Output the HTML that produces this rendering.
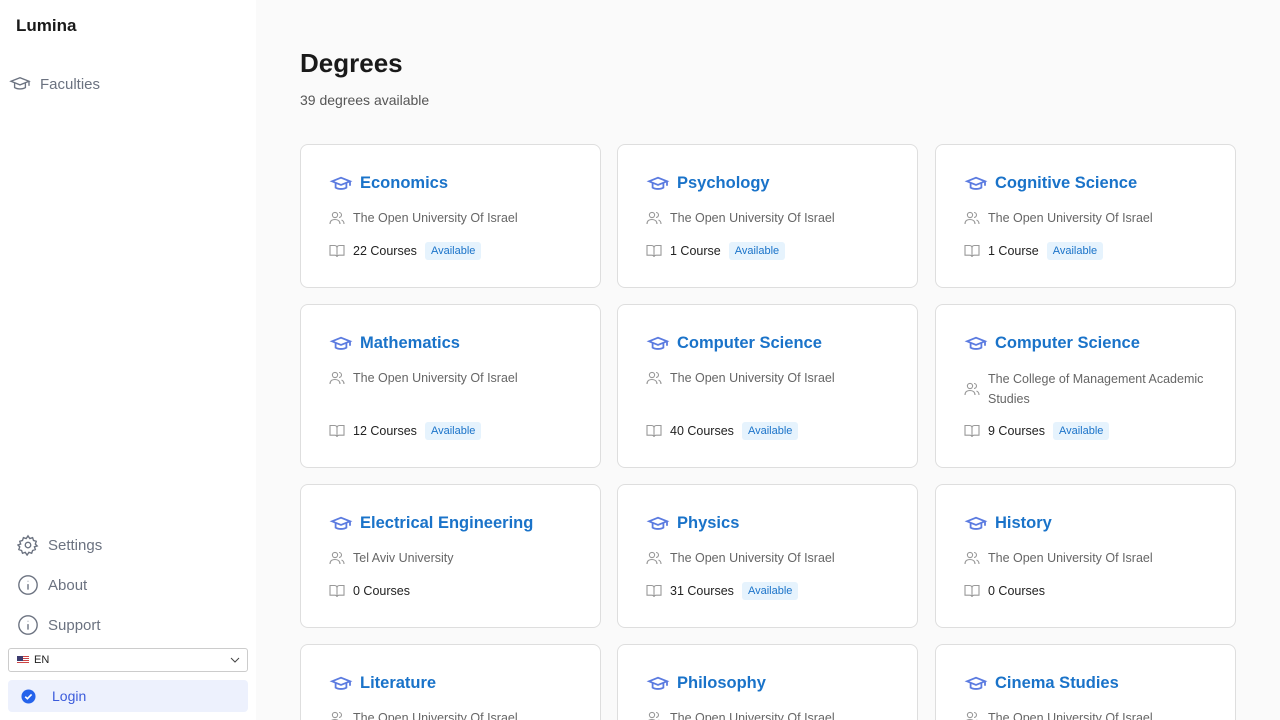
<!DOCTYPE html>
<html style="width:1280px;height:720px;overflow:hidden"><head><meta charset="utf-8"><style>
*{box-sizing:border-box;margin:0;padding:0}
body{width:1280px;height:720px;overflow:hidden;font-family:"Liberation Sans",sans-serif;background:#fafafa;position:relative}
.side{position:absolute;left:0;top:0;width:256px;height:720px;background:#fff}
.logo{position:absolute;left:16px;top:16px;font-size:17px;font-weight:bold;color:#1a1a1a}
.nav{position:absolute;display:flex;align-items:center;color:#6b7280;font-size:15px}
.nav svg{margin-right:9px}
.sel{position:absolute;left:8px;top:648px;width:240px;height:24px;border:1px solid #ccc;border-radius:3px;font-size:11px;display:flex;align-items:center;padding-left:8px;color:#222}
.login{position:absolute;left:8px;top:680px;width:240px;height:32px;background:#edf1fd;border-radius:4px;display:flex;align-items:center;padding-left:13px;color:#3b5bdb;font-size:14px}
h1{position:absolute;left:300px;top:48px;font-size:26px;color:#1a1a1a}
.sub{position:absolute;left:300px;top:92px;font-size:14px;color:#555}
.card{position:absolute;width:301px;background:#fff;border:1px solid #dedede;border-radius:8px;overflow:hidden}
.t{position:absolute;left:28px;top:29px;display:flex;align-items:center;font-size:16.5px;font-weight:bold;color:#1a73c9}
.t svg{margin-right:7px}
.r{position:absolute;left:28px;display:flex;align-items:center;font-size:12.5px;color:#666}
.r svg{margin-right:8px;flex:none}
.c{color:#222}
.b{background:#e6f3fd;color:#1a73c9;font-size:11px;padding:3px 6px;border-radius:3px;margin-left:8px}
</style></head><body>
<div class="side">
<div class="logo">Lumina</div>
<div class="nav" style="left:9px;top:75px"><svg width="22" height="18" viewBox="0 0 24 20" fill="none" stroke="#6b7280" stroke-width="1.5"><path d="M2 7l10-4 10 4-10 4z"/><path d="M6 9v5c3 2 9 2 12 0V9"/><path d="M22 7v5"/></svg>Faculties</div>
<div class="nav" style="left:17px;top:534px"><svg width="22" height="22" viewBox="0 0 24 24" fill="none" stroke="#6b7280" stroke-width="1.5"><circle cx="12" cy="12" r="3"/><path d="M12 2l2 3 3-1 1 3 3 1-1 3 2 2-3 1 1 3-3 1-1 3-3-1-2 3-2-3-3 1-1-3-3-1 1-3-2-2 3-1-1-3 3-1 1-3 3 1z"/></svg>Settings</div>
<div class="nav" style="left:17px;top:574px"><svg width="22" height="22" viewBox="0 0 24 24" fill="none" stroke="#6b7280" stroke-width="1.5"><circle cx="12" cy="12" r="10"/><path d="M12 11v6M12 7.5v.5"/></svg>About</div>
<div class="nav" style="left:17px;top:614px"><svg width="22" height="22" viewBox="0 0 24 24" fill="none" stroke="#6b7280" stroke-width="1.5"><circle cx="12" cy="12" r="10"/><path d="M12 11v6M12 7.5v.5"/></svg>Support</div>
<div class="sel"><span style="display:inline-block;width:12px;height:8px;background:repeating-linear-gradient(#c44 0 1px,#fff 1px 2px);position:relative;margin-right:5px"><span style="position:absolute;left:0;top:0;width:6px;height:5px;background:#3c3b6e"></span></span>EN<svg style="position:absolute;right:7px;top:8px" width="10" height="6" viewBox="0 0 10 6" fill="none" stroke="#444"><path d="M1 1l4 4 4-4"/></svg></div>
<div class="login"><svg width="15" height="15" viewBox="0 0 16 16" style="margin-right:16px"><circle cx="8" cy="8" r="7.5" fill="#2563eb"/><path d="M4.5 8.2l2.3 2.2 4.5-4.6" stroke="#fff" stroke-width="1.8" fill="none"/></svg>Login</div>
</div>
<h1>Degrees</h1>
<div class="sub">39 degrees available</div>
<div id="g"></div>
<script>
const cap='<svg width="24" height="18" viewBox="0 0 24 20" fill="none" stroke="#5b7be0" stroke-width="2"><path d="M2 7l10-4 10 4-10 4z"/><path d="M6 9v5c3 2 9 2 12 0V9"/><path d="M22 7v5"/></svg>';
const ppl='<svg width="16" height="14" viewBox="0 0 16 14" fill="none" stroke="#999" stroke-width="1.1"><circle cx="6" cy="4" r="2.6"/><path d="M1 13c0-3 2-4.5 5-4.5s5 1.5 5 4.5M10 1.5a2.5 2.5 0 010 5M12.5 9c1.5.6 2.5 2 2.5 4"/></svg>';
const book='<svg width="16" height="14" viewBox="0 0 16 14" fill="none" stroke="#999" stroke-width="1.1"><path d="M1 1.5h4.5c1.5 0 2.5 1 2.5 2.5v9c0-1-1-1.8-2.3-1.8H1zM15 1.5h-4.5C9 1.5 8 2.5 8 4v9c0-1 1-1.8 2.3-1.8H15z"/></svg>';
const d=[["Economics","The Open University Of Israel","22 Courses",1],["Psychology","The Open University Of Israel","1 Course",1],["Cognitive Science","The Open University Of Israel","1 Course",1],["Mathematics","The Open University Of Israel","12 Courses",1],["Computer Science","The Open University Of Israel","40 Courses",1],["Computer Science","The College of Management Academic Studies","9 Courses",1],["Electrical Engineering","Tel Aviv University","0 Courses",0],["Physics","The Open University Of Israel","31 Courses",1],["History","The Open University Of Israel","0 Courses",0],["Literature","The Open University Of Israel","",0],["Philosophy","The Open University Of Israel","",0],["Cinema Studies","The Open University Of Israel","",0]];
const xs=[300,617,935],ys=[144,304,484,644],hs=[144,164,144,144];let h='';
d.forEach((c,i)=>{const col=i%3,row=Math.floor(i/3);const tall=row==1;
const ot=tall&&col==2?'<div class="r" style="top:64px;width:250px">'+ppl+'<span style="line-height:20px">The College of Management Academic<br>Studies</span></div>':'<div class="r" style="top:66px">'+ppl+c[1]+'</div>';
h+=`<div class="card" style="left:${xs[col]}px;top:${ys[row]}px;height:${hs[row]}px"><div class="t">${cap}${c[0]}</div>${ot}${c[2]?`<div class="r" style="top:${tall?116:96}px;height:20px">${book}<span class="c">${c[2]}</span>${c[3]?'<span class="b">Available</span>':''}</div>`:''}</div>`;});
document.getElementById('g').innerHTML=h;
</script>
</body></html>
